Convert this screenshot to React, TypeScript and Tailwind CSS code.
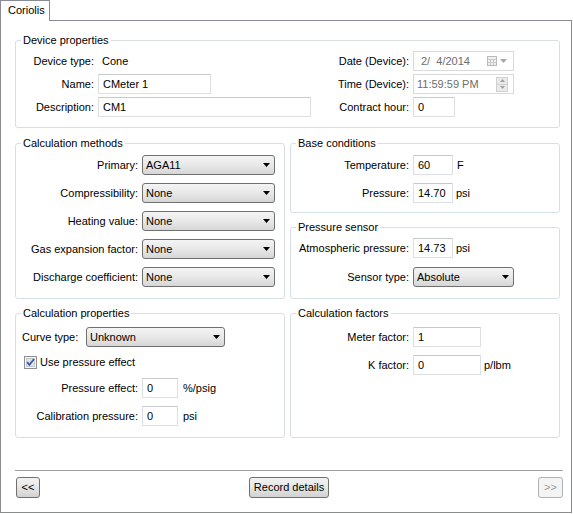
import type { ReactNode } from "react";

type GroupProps = {
  title: string;
  className: string;
  children: ReactNode;
};

function Group({ title, className, children }: GroupProps) {
  return (
    <div className={`relative rounded-[3px] border border-[#d5dfe5] ${className}`}>
      <span className="absolute -top-[8px] left-[5px] bg-white px-[2px] leading-[14px]">{title}</span>
      {children}
    </div>
  );
}

function TextBox({ value, w }: { value: string; w: string }) {
  return (
    <div className={`flex h-[20px] shrink-0 items-center border border-[#dcdfe4] border-t-[#c6c9cf] pl-[4px] ${w}`}>
      {value}
    </div>
  );
}

function Select({ value, w }: { value: string; w: string }) {
  return (
    <div
      className={`flex h-[20px] shrink-0 items-center justify-between rounded-[3px] border border-[#707070] bg-gradient-to-b from-[#f4f4f4] via-[#e8e8e8] to-[#d6d6d6] pl-[3px] pr-[4px] ${w}`}
    >
      <span>{value}</span>
      <svg width="7" height="4" viewBox="0 0 7 4">
        <path d="M0 0h7L3.5 4z" fill="#000" />
      </svg>
    </div>
  );
}

function Label({ text, w }: { text: string; w: string }) {
  return <span className={`shrink-0 pr-[4px] text-right ${w}`}>{text}</span>;
}

function Button({ text, w, disabled }: { text: string; w: string; disabled?: boolean }) {
  return (
    <div
      className={`flex h-[21px] items-center justify-center rounded-[3px] border ${w} ${
        disabled
          ? "border-[#adb2b5] bg-[#f4f4f4] text-[#9a9a9a]"
          : "border-[#707070] bg-gradient-to-b from-[#f2f2f2] via-[#e6e6e6] to-[#d2d2d2]"
      }`}
    >
      {text}
    </div>
  );
}

export default function App() {
  return (
    <div className="h-[514px] w-[573px] bg-white text-[11px] leading-[13px] text-black font-['Liberation_Sans',Arial,sans-serif]">
      <div className="flex h-[21px] w-[572px]">
        <div className="h-[21px] w-[50px] border-x border-t border-[#898c95] bg-white pl-[7px] pt-[3px]">Coriolis</div>
        <div className="flex-1 border-b border-[#898c95]" />
      </div>

      <div className="h-[492px] w-[572px] border-x border-b border-[#898c95] pl-[14px] pt-[19px]">
        <Group title="Device properties" className="h-[88px] w-[545px]">
          <div className="grid grid-cols-[275px_1fr] pt-[10px]">
            <div className="flex flex-col gap-[3px]">
              <div className="flex h-[20px] items-center">
                <Label text="Device type:" w="w-[82px]" />
                <span className="pl-[4px]">Cone</span>
              </div>
              <div className="flex h-[20px] items-center">
                <Label text="Name:" w="w-[82px]" />
                <TextBox value="CMeter 1" w="w-[113px]" />
              </div>
              <div className="flex h-[20px] items-center">
                <Label text="Description:" w="w-[82px]" />
                <TextBox value="CM1" w="w-[213px]" />
              </div>
            </div>
            <div className="flex flex-col gap-[3px]">
              <div className="flex h-[20px] items-center">
                <Label text="Date (Device):" w="w-[122px]" />
                <div className="flex h-[20px] w-[101px] items-center justify-between border border-[#dadada] pl-[7px] pr-[6px] text-[#6d6d6d]">
                  <span className="whitespace-pre">{"2/  4/2014"}</span>
                  <span className="flex items-center gap-[3px]">
                    <svg width="10" height="10" viewBox="0 0 10 10">
                      <rect x="0.5" y="0.5" width="9" height="9" fill="#f0f0f0" stroke="#b8b8b8" />
                      <path d="M0.5 3.5h9M0.5 6.5h9M3.5 3.5v6M6.5 3.5v6" stroke="#c8c8c8" />
                    </svg>
                    <svg width="7" height="4" viewBox="0 0 7 4">
                      <path d="M0 0h7L3.5 4z" fill="#a8a8a8" />
                    </svg>
                  </span>
                </div>
              </div>
              <div className="flex h-[20px] items-center">
                <Label text="Time (Device):" w="w-[122px]" />
                <div className="flex h-[20px] w-[101px] items-center justify-between border border-[#dadada] pl-[3px] pr-[5px] text-[#6d6d6d]">
                  <span>11:59:59 PM</span>
                  <div className="flex h-[15px] w-[12px] flex-col border border-[#d0d0d0] bg-[#eaeaea]">
                    <div className="flex flex-1 items-center justify-center border-b border-[#d0d0d0]">
                      <svg width="5" height="3" viewBox="0 0 5 3">
                        <path d="M0 3h5L2.5 0z" fill="#a0a0a0" />
                      </svg>
                    </div>
                    <div className="flex flex-1 items-center justify-center">
                      <svg width="5" height="3" viewBox="0 0 5 3">
                        <path d="M0 0h5L2.5 3z" fill="#a0a0a0" />
                      </svg>
                    </div>
                  </div>
                </div>
              </div>
              <div className="flex h-[20px] items-center">
                <Label text="Contract hour:" w="w-[122px]" />
                <TextBox value="0" w="w-[42px]" />
              </div>
            </div>
          </div>
        </Group>

        <div className="mt-[15px] grid w-[545px] grid-cols-[270px_270px] gap-x-[5px]">
          <div className="flex flex-col gap-[14px]">
            <Group title="Calculation methods" className="h-[156px]">
              <div className="flex flex-col gap-[8px] pt-[11px]">
                {[
                  ["Primary:", "AGA11"],
                  ["Compressibility:", "None"],
                  ["Heating value:", "None"],
                  ["Gas expansion factor:", "None"],
                  ["Discharge coefficient:", "None"],
                ].map(([label, value]) => (
                  <div key={label} className="flex h-[20px] items-center">
                    <Label text={label} w="w-[126px]" />
                    <Select value={value} w="w-[133px]" />
                  </div>
                ))}
              </div>
            </Group>

            <Group title="Calculation properties" className="h-[125px]">
              <div className="flex flex-col pt-[13px]">
                <div className="flex h-[20px] items-center pl-[6px]">
                  <span className="w-[64px] shrink-0">Curve type:</span>
                  <Select value="Unknown" w="w-[139px]" />
                </div>
                <div className="mt-[9px] flex h-[13px] items-center gap-[3px] pl-[8px]">
                  <svg width="13" height="13" viewBox="0 0 13 13">
                    <rect x="0.5" y="0.5" width="12" height="12" fill="#f6f6f6" stroke="#8e8f8f" />
                    <rect x="2.5" y="2.5" width="8" height="8" fill="#dde2ea" stroke="#c4c9d3" />
                    <path d="M3.2 6.2 L5.4 8.8 L10 3" fill="none" stroke="#3d5aa5" strokeWidth="1.8" />
                  </svg>
                  <span>Use pressure effect</span>
                </div>
                <div className="mt-[9px] flex h-[20px] items-center">
                  <Label text="Pressure effect:" w="w-[126px]" />
                  <TextBox value="0" w="w-[36px]" />
                  <span className="ml-[5px]">%/psig</span>
                </div>
                <div className="mt-[8px] flex h-[20px] items-center">
                  <Label text="Calibration pressure:" w="w-[126px]" />
                  <TextBox value="0" w="w-[36px]" />
                  <span className="ml-[5px]">psi</span>
                </div>
              </div>
            </Group>
          </div>

          <div className="flex flex-col gap-[14px]">
            <Group title="Base conditions" className="h-[70px]">
              <div className="flex flex-col gap-[8px] pt-[11px]">
                <div className="flex h-[20px] items-center">
                  <Label text="Temperature:" w="w-[122px]" />
                  <TextBox value="60" w="w-[40px]" />
                  <span className="ml-[4px]">F</span>
                </div>
                <div className="flex h-[20px] items-center">
                  <Label text="Pressure:" w="w-[122px]" />
                  <TextBox value="14.70" w="w-[40px]" />
                  <span className="ml-[3px]">psi</span>
                </div>
              </div>
            </Group>

            <Group title="Pressure sensor" className="h-[72px]">
              <div className="flex flex-col gap-[9px] pt-[10px]">
                <div className="flex h-[20px] items-center">
                  <Label text="Atmospheric pressure:" w="w-[122px]" />
                  <TextBox value="14.73" w="w-[40px]" />
                  <span className="ml-[3px]">psi</span>
                </div>
                <div className="flex h-[20px] items-center">
                  <Label text="Sensor type:" w="w-[122px]" />
                  <Select value="Absolute" w="w-[101px]" />
                </div>
              </div>
            </Group>

            <Group title="Calculation factors" className="h-[125px]">
              <div className="flex flex-col gap-[8px] pt-[13px]">
                <div className="flex h-[20px] items-center">
                  <Label text="Meter factor:" w="w-[122px]" />
                  <TextBox value="1" w="w-[68px]" />
                </div>
                <div className="flex h-[20px] items-center">
                  <Label text="K factor:" w="w-[122px]" />
                  <TextBox value="0" w="w-[68px]" />
                  <span className="ml-[3px]">p/lbm</span>
                </div>
              </div>
            </Group>
          </div>
        </div>

        <div className="mt-[32px] h-px w-[548px] bg-[#a0a0a0]" />

        <div className="ml-[1px] mt-[6px] flex w-[547px] items-center justify-between">
          <Button text="<<" w="w-[24px]" />
          <Button text="Record details" w="w-[80px]" />
          <Button text=">>" w="w-[25px]" disabled />
        </div>
      </div>
    </div>
  );
}
